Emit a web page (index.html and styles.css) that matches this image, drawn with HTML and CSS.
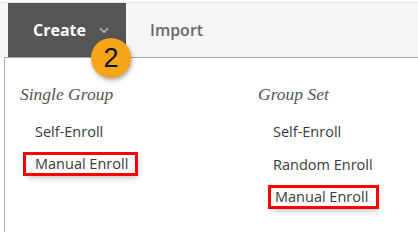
FILE: index.html
```html
<!DOCTYPE html>
<html>
<head>
<meta charset="utf-8">
<link rel="stylesheet" href="styles.css">
</head>
<body>
<div class="page">
  <div class="bar">
    <div class="tab tab-active">
      <span>Create</span>
      <svg class="chev" width="10" height="7" viewBox="0 0 10 7"><path d="M1 1.2 L5 5.2 L9 1.2" fill="none" stroke="#a8a8a8" stroke-width="2"/></svg>
    </div>
    <div class="tab tab-plain">Import</div>
    <div class="badge">2</div>
  </div>
  <div class="panel">
    <div class="col col-left">
      <div class="head">Single Group</div>
      <ul class="items">
        <li>Self-Enroll</li>
        <li class="hl">Manual Enroll</li>
      </ul>
    </div>
    <div class="col col-right">
      <div class="head">Group Set</div>
      <ul class="items">
        <li>Self-Enroll</li>
        <li>Random Enroll</li>
        <li class="hl hl-tight">Manual Enroll</li>
      </ul>
    </div>
  </div>
</div>
</body>
</html>
```
FILE: styles.css
```css
html, body {
  margin: 0;
  padding: 0;
  background: #ffffff;
}
.page {
  width: 418px;
  height: 232px;
  overflow: hidden;
  font-family: "Open Sans", "Liberation Sans", sans-serif;
}
.bar {
  position: relative;
  margin-top: 2px;
  border-top: 1px solid #e6e6e6;
  height: 54px;
  background: #f6f6f6;
  display: flex;
  padding-left: 8px;
}
.tab {
  display: flex;
  align-items: center;
  font-size: 16px;
  height: 54px;
}
.tab-active {
  width: 118px;
  background: #555555;
  color: #ffffff;
  font-weight: 700;
  padding-left: 25px;
  box-sizing: border-box;
  gap: 13px;
}
.chev { margin-top: 1px; }
.tab-plain {
  color: #6a6a6a;
  font-weight: 600;
  padding-left: 24px;
}
.badge {
  position: absolute;
  left: 91px;
  top: 35px;
  width: 40px;
  height: 40px;
  border-radius: 50%;
  background: #f5a51a;
  box-shadow: 1px 2px 4px rgba(0,0,0,0.35);
  color: #111;
  font-family: "Liberation Sans", Arial, sans-serif;
  font-size: 27px;
  line-height: 40px;
  text-align: center;
  z-index: 2;
}
.panel {
  margin-left: 4px;
  border-left: 1px solid #a9a9a9;
  border-top: 1px solid #a9a9a9;
  height: 180px;
  display: grid;
  grid-template-columns: 238px 1fr;
  padding-left: 15px;
}
.head {
  font-family: "Liberation Serif", "DejaVu Serif", serif;
  font-style: italic;
  font-size: 17.5px;
  color: #555;
  margin-top: 26px;
  line-height: 20px;
}
.items {
  list-style: none;
  margin: 18px 0 0 0;
  padding: 0 0 0 15px;
}
.items li {
  font-size: 14.5px;
  color: #3a3a3a;
  line-height: 20px;
  height: 20px;
  margin-bottom: 13px;
  width: max-content;
}
.items li.hl {
  line-height: 18px;
  height: 18px;
  margin-top: 1px;
  outline: 3px solid #ff0000;
  outline-offset: 0;
  margin-left: -9px;
  padding: 0 7px 0 9px;
  box-shadow: 2px 4px 6px rgba(0,0,0,0.3);
}
.items li.hl-tight {
  margin-left: -2px;
  padding: 0 8px 0 4px;
}
```
